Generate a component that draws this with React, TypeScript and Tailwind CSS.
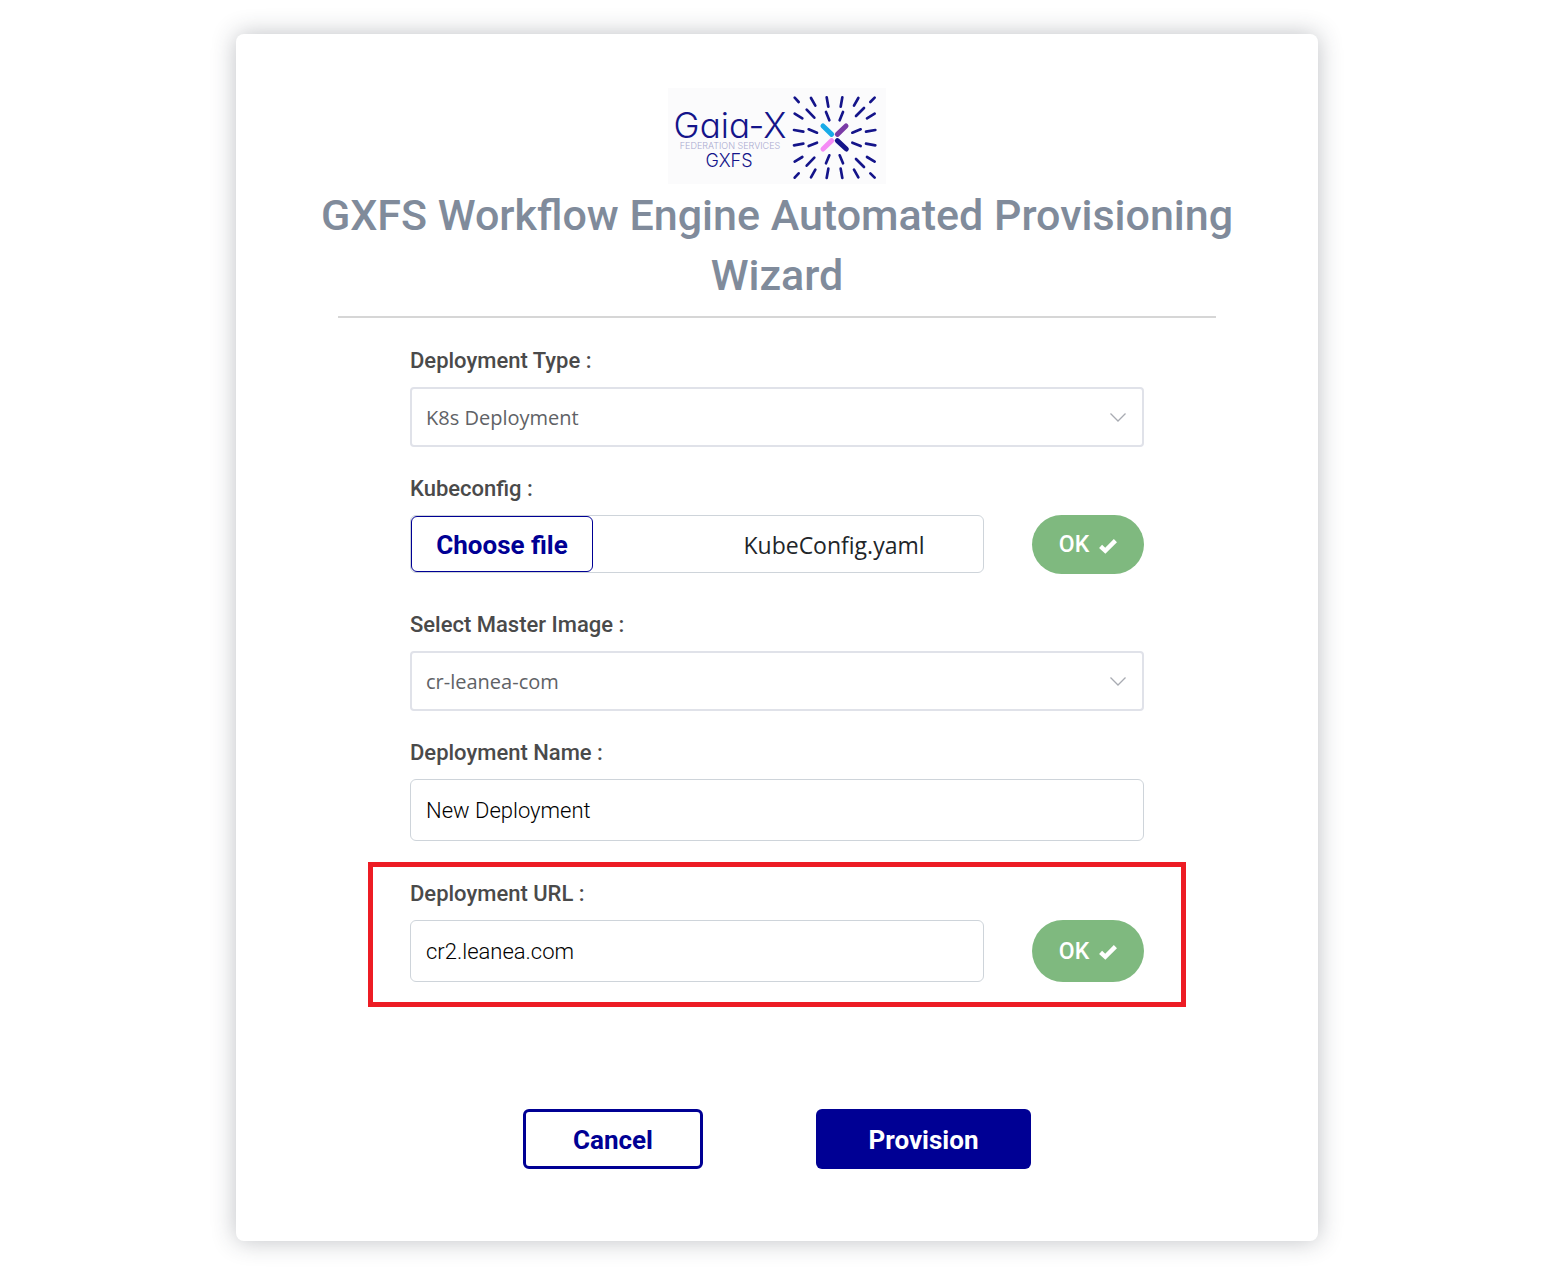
import { useState } from 'react';
import type { ReactNode } from 'react';

const RAYS =
  'M44 53L56 66M93 54L106 77M140 52L145 80M187 52L182 80M235 54L222 77M284 53L271 66' +
  'M44 101L67 115M80 89L103 113M138 96L148 121M189 96L179 121M252 84L228 108M284 101L261 115' +
  'M42 150L70 155M86 148L111 158M242 148L217 158M286 150L258 155' +
  'M42 196L70 191M86 198L111 188M242 198L217 188M286 196L258 191' +
  'M44 245L67 231M80 257L103 233M138 250L148 226M189 250L179 226M252 261L228 237M284 245L261 231' +
  'M44 293L56 280M93 292L106 269M140 294L145 266M187 294L182 266M235 292L222 269M284 293L271 280';

function Logo() {
  return (
    <svg className="mx-auto block h-24 w-[218px] bg-[#fbfbfc]" viewBox="0 0 218 96" role="img" aria-label="Gaia-X Federation Services GXFS">
      <g fill="#14148a" textAnchor="middle" className="font-['Inter',sans-serif]">
        <text x="62" y="50" fontSize="35" fontWeight="300" className="[font-feature-settings:'cv11']">Gaia-X</text>
        <text x="62" y="61" fontSize="9" fontWeight="300" fill="#a9a9cf">FEDERATION SERVICES</text>
        <text x="61" y="79" fontSize="18" fontWeight="300">GXFS</text>
      </g>
      <g transform="translate(112 -8) scale(0.33333)" fill="none" strokeLinecap="round">
        <path d={RAYS} stroke="#14148a" strokeWidth="8" />
        <g strokeWidth="15">
          <path d="M129 138L155 163" stroke="#18abe8" />
          <path d="M198 138L172 163" stroke="#7a3ba6" />
          <path d="M129 207L155 182" stroke="#f58bf5" />
          <path d="M172 182L199 207" stroke="#14148a" />
        </g>
      </g>
    </svg>
  );
}

function FieldLabel({ id, children }: { id: string; children: ReactNode }) {
  return (
    <label htmlFor={id} className="mb-2 block text-[22px] leading-9 font-medium text-[#4a4a4a]">
      {children}
    </label>
  );
}

function SelectField({ id, label, options }: { id: string; label: string; options: string[] }) {
  return (
    <div>
      <FieldLabel id={id}>{label}</FieldLabel>
      <div className="relative">
        <select
          id={id}
          className="block h-[60px] w-full appearance-none rounded-sm border-2 border-[#e0e2e9] bg-white px-3.5 pt-0.5 font-['Open_Sans',sans-serif] text-xl text-[#606266]"
        >
          {options.map((o) => (
            <option key={o}>{o}</option>
          ))}
        </select>
        <svg className="pointer-events-none absolute top-[26px] right-[18px] h-[9px] w-4" viewBox="0 0 16 9" fill="none" stroke="#a8abb2" strokeWidth="1.3">
          <path d="M0.5 0.5L8 8L15.5 0.5" />
        </svg>
      </div>
    </div>
  );
}

function OkButton() {
  return (
    <button type="button" className="flex w-28 shrink-0 items-center justify-center gap-2.5 rounded-full bg-[#7fb97f] pt-0.5 text-[23px] font-medium text-white">
      OK
      <svg className="h-4 w-[18px]" viewBox="0 0 18 16" fill="none" stroke="#fff" strokeWidth="4.4">
        <path d="M1.6 8.4L6.3 12.8L16.4 2.6" />
      </svg>
    </button>
  );
}

const inputClass =
  'block h-[62px] w-full min-w-0 rounded-md border border-[#ced4da] bg-white px-[15px] text-[22px] font-light text-black';

export default function App() {
  const [fileName, setFileName] = useState('KubeConfig.yaml');
  return (
    <div className="min-h-screen bg-white py-[34px] pr-[25px] pl-6 font-['Roboto',sans-serif]">
      <main className="mx-auto max-w-[1082px] rounded-lg bg-white pt-[54px] pb-[72px] shadow-[0_0_24px_rgba(40,45,60,0.3)]">
        <Logo />
        <h1 className="mx-auto max-w-[960px] pt-px text-center text-[43px] leading-[60px] font-medium text-[#808b9b]">
          GXFS Workflow Engine Automated Provisioning Wizard
        </h1>
        <hr className="mx-[102px] mt-[11px] border-t-2 border-[#d6d6d6]" />
        <form className="mt-[25px] px-[132px]" onSubmit={(e) => e.preventDefault()}>
          <div className="px-[42px]">
            <SelectField id="type" label="Deployment Type :" options={['K8s Deployment']} />
            <div className="mt-6">
              <FieldLabel id="kubeconfig">Kubeconfig :</FieldLabel>
              <div className="flex h-[59px] gap-12">
                <div className="flex h-[58px] grow rounded-md border border-[#ced4da]">
                  <input
                    id="kubeconfig"
                    type="file"
                    className="peer sr-only"
                    onChange={(e) => setFileName(e.target.files?.[0]?.name ?? fileName)}
                  />
                  <label
                    htmlFor="kubeconfig"
                    className="flex w-[182px] shrink-0 cursor-pointer items-center justify-center rounded-md border border-[#000094] pt-0.5 text-[26px] font-bold text-[#000094] peer-focus-visible:outline-2"
                  >
                    Choose file
                  </label>
                  <span className="flex grow items-center justify-center pt-0.5 pl-[92px] font-['Open_Sans',sans-serif] text-[23px] text-[#212529]">
                    {fileName}
                  </span>
                </div>
                <OkButton />
              </div>
            </div>
            <div className="mt-[33px]">
              <SelectField id="image" label="Select Master Image :" options={['cr-leanea-com']} />
            </div>
            <div className="mt-6">
              <FieldLabel id="name">Deployment Name :</FieldLabel>
              <input id="name" type="text" defaultValue="New Deployment" className={inputClass} />
            </div>
          </div>
          <div className="mt-[21px] border-[5px] border-[#ed1c24] px-[37px] pt-[9px] pb-5">
            <FieldLabel id="url">Deployment URL :</FieldLabel>
            <div className="flex gap-12">
              <input id="url" type="text" defaultValue="cr2.leanea.com" className={inputClass} />
              <OkButton />
            </div>
          </div>
          <div className="mt-[102px] flex justify-center gap-[113px]">
            <button type="button" className="h-[60px] w-[180px] rounded-md border-3 border-[#000094] bg-white pt-0.5 text-[26px] font-bold text-[#000094]">
              Cancel
            </button>
            <button type="submit" className="h-[60px] w-[215px] rounded-md bg-[#000094] pt-0.5 text-[26px] font-bold text-white">
              Provision
            </button>
          </div>
        </form>
      </main>
    </div>
  );
}
